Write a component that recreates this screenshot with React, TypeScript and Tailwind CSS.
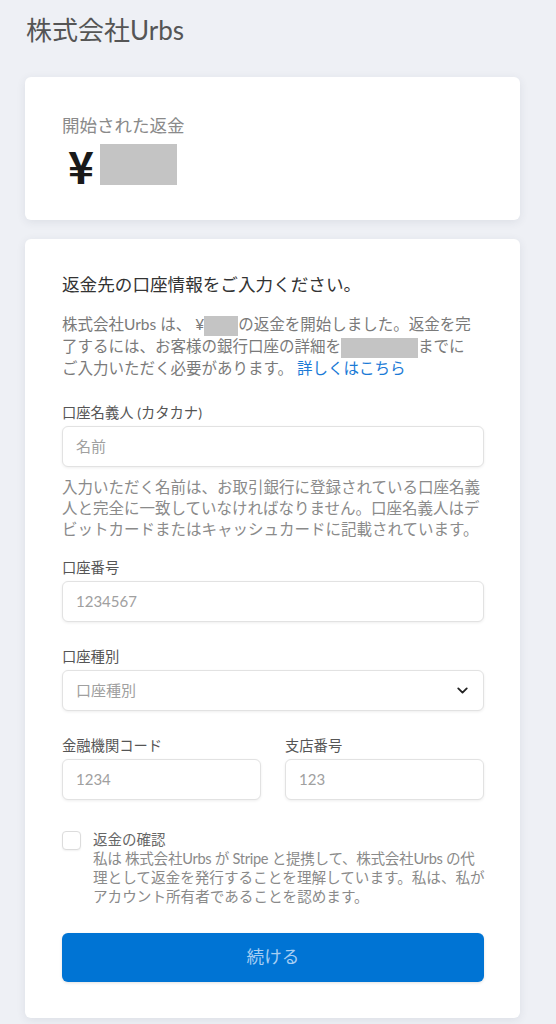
import { ChevronDown } from "lucide-react";

const font = "font-['Lato','Noto_Sans_CJK_JP',sans-serif]";

function Redacted({ className }: { className: string }) {
  return <span className={`inline-block bg-[#c4c4c4] align-middle ${className}`} />;
}

function Label({ children }: { children: React.ReactNode }) {
  return <div className="mb-[3px] text-[14.3px] leading-[20px] text-[#555]">{children}</div>;
}

function TextInput({ placeholder }: { placeholder: string }) {
  return (
    <div className="flex h-[41px] items-center rounded-[6px] border border-[#e2e2e2] bg-white px-[13px] text-[15px] text-[#a0a0a0] shadow-[0_1px_3px_rgba(0,0,0,0.07)]">
      {placeholder}
    </div>
  );
}

export default function App() {
  return (
    <div className={`min-h-screen w-[556px] bg-[#eef0f5] pl-[25px] pt-[14px] pb-6 ${font}`}>
      <h1 className="pl-px text-[26px] leading-[32px] text-[#555]">株式会社Urbs</h1>

      {/* 金額カード */}
      <div className="mt-[31px] h-[143px] w-[495px] rounded-[6px] bg-white pl-[37px] pt-[37px] shadow-[0_2px_10px_rgba(40,50,80,0.09)]">
        <div className="text-[17.5px] leading-[24px] text-[#8a8a8a]">開始された返金</div>
        <div className="mt-[6px] flex h-[41px] items-center gap-[6px] pl-[6px]">
          <span className="font-['Noto_Sans_CJK_JP',sans-serif] text-[44px] font-bold leading-none text-[#1a1a1a]">¥</span>
          <Redacted className="h-[41px] w-[77px]" />
        </div>
      </div>

      {/* 口座情報フォーム */}
      <div className="mt-[19px] w-[495px] rounded-[6px] bg-white pl-[37px] pr-[36px] pt-[33px] pb-[36px] shadow-[0_2px_10px_rgba(40,50,80,0.09)]">
        <h2 className="text-[17.6px] leading-[26px] text-[#333]">返金先の口座情報をご入力ください。</h2>
        <p className="mt-[16px] whitespace-nowrap text-[15.5px] leading-[20.5px] text-[#7a7a7a]">
          株式会社Urbs は、 ¥<Redacted className="h-[20px] w-[34px]" />の返金を開始しました。返金を完
          <br />
          了するには、お客様の銀行口座の詳細を<Redacted className="h-[20px] w-[77px]" />までに
          <br />
          ご入力いただく必要があります。 <span className="text-[#1a7ad6]">詳しくはこちら</span>
        </p>

        <div className="mt-[24px]">
          <Label>口座名義人 (カタカナ)</Label>
          <TextInput placeholder="名前" />
        </div>
        <p className="mt-[10px] whitespace-nowrap text-[15.5px] leading-[21px] text-[#8a8a8a]">
          入力いただく名前は、お取引銀行に登録されている口座名義
          <br />
          人と完全に一致していなければなりません。口座名義人はデ
          <br />
          ビットカードまたはキャッシュカードに記載されています。
        </p>

        <div className="mt-[18px]">
          <Label>口座番号</Label>
          <TextInput placeholder="1234567" />
        </div>

        <div className="mt-[25px]">
          <Label>口座種別</Label>
          <div className="flex h-[41px] items-center justify-between rounded-[6px] border border-[#e2e2e2] bg-white pl-[13px] pr-[12px] text-[15px] text-[#a0a0a0] shadow-[0_1px_3px_rgba(0,0,0,0.07)]">
            口座種別
            <ChevronDown size={17} strokeWidth={2.6} className="text-[#222]" />
          </div>
        </div>

        <div className="mt-[25px] grid grid-cols-2 gap-x-[24px]">
          <div>
            <Label>金融機関コード</Label>
            <TextInput placeholder="1234" />
          </div>
          <div>
            <Label>支店番号</Label>
            <TextInput placeholder="123" />
          </div>
        </div>

        <div className="mt-[30px] flex gap-[12px]">
          <div className="mt-px h-[19px] w-[19px] shrink-0 rounded-[4px] border border-[#dcdcdc] bg-white shadow-[0_1px_2px_rgba(0,0,0,0.06)]" />
          <div>
            <div className="text-[14.5px] leading-[19px] text-[#666]">返金の確認</div>
            <p className="whitespace-nowrap text-[14.6px] leading-[19.3px] text-[#8a8a8a]">
              <span className="tracking-[-0.3px]">私は 株式会社Urbs が Stripe と提携して、株式会社Urbs の代</span>
              <br />
              理として返金を発行することを理解しています。私は、私が
              <br />
              アカウント所有者であることを認めます。
            </p>
          </div>
        </div>

        <button className="mt-[26px] flex h-[49px] w-full items-center justify-center rounded-[6px] bg-[#0074d4] text-[17.6px] text-[#a6cef3] shadow-[0_1px_3px_rgba(0,0,0,0.12)]">
          続ける
        </button>
      </div>
    </div>
  );
}
